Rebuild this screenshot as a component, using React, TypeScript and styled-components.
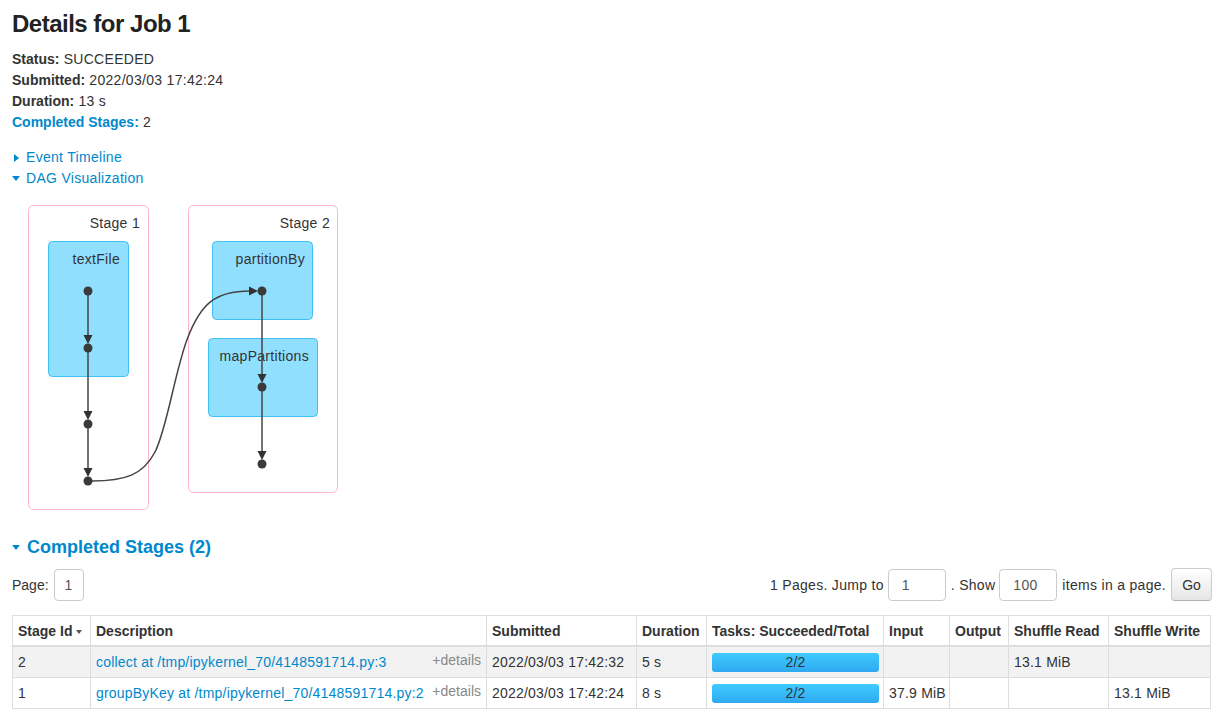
import React from 'react';
import styled, { createGlobalStyle } from 'styled-components';

const GlobalStyle = createGlobalStyle`
  body {
    margin: 0;
    padding: 0 12px;
    font-family: "Liberation Sans", Arial, sans-serif;
    font-size: 14px;
    letter-spacing: 0.3px;
    color: #333;
    background: #fff;
  }
`;

const LINK = '#0088cc';

interface StageRow {
    id: number;
    name: string;
    submitted: string;
    duration: string;
    tasks: string;
    input: string;
    output: string;
    shuffleRead: string;
    shuffleWrite: string;
}

const stages: StageRow[] = [
    {id: 2, name: 'collect at /tmp/ipykernel_70/4148591714.py:3', submitted: '2022/03/03 17:42:32', duration: '5 s', tasks: '2/2', input: '', output: '', shuffleRead: '13.1 MiB', shuffleWrite: ''},
    {id: 1, name: 'groupByKey at /tmp/ipykernel_70/4148591714.py:2', submitted: '2022/03/03 17:42:24', duration: '8 s', tasks: '2/2', input: '37.9 MiB', output: '', shuffleRead: '', shuffleWrite: '13.1 MiB'}
];

const columns = [
    {title: 'Stage Id', width: 78, sorted: true},
    {title: 'Description', width: 396},
    {title: 'Submitted', width: 150},
    {title: 'Duration', width: 70},
    {title: 'Tasks: Succeeded/Total', width: 177},
    {title: 'Input', width: 66},
    {title: 'Output', width: 59},
    {title: 'Shuffle Read', width: 100},
    {title: 'Shuffle Write', width: 102}
];

const Page = styled.div`
    width: 1200px;
`;

const Title = styled.h3`
    margin: 10px 0 11px;
    font-size: 24px;
    line-height: 28px;
    font-weight: bold;
    letter-spacing: -0.5px;
    color: #222;
`;

const Summary = styled.ul`
    list-style: none;
    margin: 0;
    padding: 0;
`;

const SummaryItem = styled.li`
    line-height: 21px;
`;

const Label = styled.strong<{ $link?: boolean }>`
    letter-spacing: 0;
    color: ${p => p.$link ? LINK : '#333'};
`;

const Toggles = styled.div`
    margin-top: 14px;
`;

const Toggle = styled.div`
    display: flex;
    align-items: center;
    line-height: 21px;
    color: ${LINK};
`;

const Caret = styled.span<{ $open?: boolean }>`
    display: inline-block;
    width: 0;
    height: 0;
    ${p => p.$open
        ? `border-top: 5px solid ${LINK}; border-left: 4px solid transparent; border-right: 4px solid transparent; margin-right: 6px;`
        : `border-left: 5px solid ${LINK}; border-top: 4px solid transparent; border-bottom: 4px solid transparent; margin: 0 7px 0 2px;`}
`;

const DagSvg = styled.svg`
    display: block;
    margin-top: 6px;
    font-family: "Liberation Sans", Arial, sans-serif;
    font-size: 14px;
`;

const SectionHeading = styled.h4`
    display: flex;
    align-items: center;
    margin: 20px 0 0;
    font-size: 18px;
    line-height: 24px;
    font-weight: bold;
    letter-spacing: 0;
    color: ${LINK};
`;

const PagerRow = styled.div`
    display: flex;
    justify-content: space-between;
    align-items: center;
    margin-top: 9px;
    height: 33px;
`;

const PagerGroup = styled.div`
    display: flex;
    align-items: center;
`;

const PageLabel = styled.span`
    letter-spacing: 0;
`;

const FakeInput = styled.div<{ $w: number }>`
    box-sizing: border-box;
    width: ${p => p.$w}px;
    height: 32px;
    border: 1px solid #ccc;
    border-radius: 4px;
    line-height: 30px;
    padding-left: 13px;
    color: #555;
    margin: 0 5px 0 4px;
`;

const CenterInput = styled(FakeInput)`
    padding-left: 0;
    text-align: center;
    margin-left: 5px;
`;

const GoButton = styled.button`
    box-sizing: border-box;
    width: 41px;
    height: 33px;
    margin-left: 5px;
    border: 1px solid #ccc;
    border-bottom-color: #b3b3b3;
    border-radius: 4px;
    background: linear-gradient(#ffffff, #e6e6e6);
    font-family: inherit;
    font-size: 14px;
    color: #333;
    padding: 0;
`;

const Table = styled.table`
    margin-top: 14px;
    width: 1199px;
    table-layout: fixed;
    border-collapse: collapse;
    border: 1px solid #ddd;
`;

const Th = styled.th`
    text-align: left;
    font-weight: bold;
    letter-spacing: 0;
    padding: 5px 5px 4px;
    line-height: 20px;
    border: 1px solid #ddd;
    border-bottom: 2px solid #ddd;
    white-space: nowrap;
    overflow: hidden;
`;

const SortArrow = styled.span`
    display: inline-block;
    width: 0;
    height: 0;
    margin-left: 4px;
    vertical-align: middle;
    border-top: 4px solid #555;
    border-left: 3px solid transparent;
    border-right: 3px solid transparent;
`;

const Tr = styled.tr<{ $striped?: boolean }>`
    background: ${p => p.$striped ? '#f2f2f2' : '#fff'};
`;

const Td = styled.td`
    padding: 5px;
    line-height: 20px;
    letter-spacing: 0.2px;
    border: 1px solid #ddd;
    white-space: nowrap;
    overflow: hidden;
`;

const DescLink = styled.a`
    color: ${LINK};
    text-decoration: none;
`;

const Details = styled.span`
    float: right;
    color: #888;
    letter-spacing: 0;
    margin-top: -2px;
`;

const Progress = styled.div`
    height: 19px;
    margin-right: -1px;
    border-radius: 3px;
    background: linear-gradient(#3fcbff, #2ea9f0);
    text-align: center;
    line-height: 19px;
    color: #333;
`;

function Dag() {
    const vEdges: [number, number, number][] = [
        [76, 96, 153], [76, 153, 229], [76, 229, 286],
        [250, 96, 192], [250, 192, 269]
    ];
    const nodes: [number, number][] = [
        [76, 96], [76, 153], [76, 229], [76, 286],
        [250, 96], [250, 192], [250, 269]
    ];
    return (
        <DagSvg width={340} height={320}>
            <rect x={16.5} y={10.5} width={120} height={304} rx={5} fill="#fff" stroke="#ffb5c6" />
            <rect x={176.5} y={10.5} width={149} height={287} rx={5} fill="#fff" stroke="#ffb5c6" />
            <text x={128} y={33} textAnchor="end" fill="#333">Stage 1</text>
            <text x={318} y={33} textAnchor="end" fill="#333">Stage 2</text>

            <rect x={36.5} y={46.5} width={80} height={135} rx={4} fill="#90dfff" stroke="#3ec0f5" />
            <rect x={200.5} y={46.5} width={100} height={78} rx={4} fill="#90dfff" stroke="#3ec0f5" />
            <rect x={196.5} y={143.5} width={109} height={78} rx={4} fill="#90dfff" stroke="#3ec0f5" />
            <text x={108} y={69} textAnchor="end" fill="#333">textFile</text>
            <text x={293} y={69} textAnchor="end" fill="#333">partitionBy</text>
            <text x={297} y={166} textAnchor="end" fill="#333">mapPartitions</text>

            {vEdges.map(([x, y1, y2], i) => (
                <g key={i}>
                    <line x1={x} y1={y1 + 4} x2={x} y2={y2 - 10} stroke="#444" strokeWidth={1.5} />
                    <polygon points={`${x - 4.5},${y2 - 13} ${x + 4.5},${y2 - 13} ${x},${y2 - 4}`} fill="#333" />
                </g>
            ))}

            <path
                d="M 80 286 C 113 286, 131 280, 143 257 C 155 234, 163 175, 176 142 C 189 109, 203 96, 238 96"
                fill="none" stroke="#444" strokeWidth={1.5}
            />
            <polygon points="237,91.5 237,100.5 246,96" fill="#333" />

            {nodes.map(([x, y], i) => (
                <circle key={i} cx={x} cy={y} r={4.5} fill="#3a3a3a" />
            ))}
        </DagSvg>
    );
}

function App() {
    return (
        <Page>
            <GlobalStyle />
            <Title>Details for Job 1</Title>
            <Summary>
                <SummaryItem><Label>Status:</Label> SUCCEEDED</SummaryItem>
                <SummaryItem><Label>Submitted:</Label> 2022/03/03 17:42:24</SummaryItem>
                <SummaryItem><Label>Duration:</Label> 13 s</SummaryItem>
                <SummaryItem><Label $link>Completed Stages:</Label> 2</SummaryItem>
            </Summary>

            <Toggles>
                <Toggle><Caret />Event Timeline</Toggle>
                <Toggle><Caret $open />DAG Visualization</Toggle>
            </Toggles>

            <Dag />

            <SectionHeading><Caret $open style={{marginRight: 7}} />Completed Stages (2)</SectionHeading>

            <PagerRow>
                <PagerGroup>
                    <PageLabel>Page:</PageLabel>
                    <CenterInput $w={30}>1</CenterInput>
                </PagerGroup>
                <PagerGroup>
                    1 Pages. Jump to
                    <FakeInput $w={58}>1</FakeInput>
                    . Show
                    <FakeInput $w={58}>100</FakeInput>
                    items in a page.
                    <GoButton>Go</GoButton>
                </PagerGroup>
            </PagerRow>

            <Table>
                <colgroup>
                    {columns.map(c => <col key={c.title} style={{width: c.width}} />)}
                </colgroup>
                <thead>
                    <tr>
                        {columns.map(c => (
                            <Th key={c.title}>{c.title}{c.sorted && <SortArrow />}</Th>
                        ))}
                    </tr>
                </thead>
                <tbody>
                    {stages.map((s, i) => (
                        <Tr key={s.id} $striped={i % 2 === 0}>
                            <Td>{s.id}</Td>
                            <Td>
                                <DescLink href="#">{s.name}</DescLink>
                                <Details>+details</Details>
                            </Td>
                            <Td>{s.submitted}</Td>
                            <Td>{s.duration}</Td>
                            <Td><Progress>{s.tasks}</Progress></Td>
                            <Td>{s.input}</Td>
                            <Td>{s.output}</Td>
                            <Td>{s.shuffleRead}</Td>
                            <Td>{s.shuffleWrite}</Td>
                        </Tr>
                    ))}
                </tbody>
            </Table>
        </Page>
    );
}

export default App;
